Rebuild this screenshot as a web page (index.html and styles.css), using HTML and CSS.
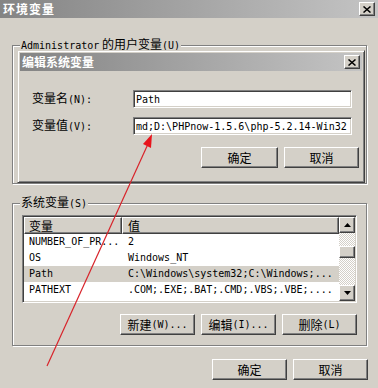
FILE: index.html
```html
<!DOCTYPE html>
<html lang="zh-CN">
<head>
  <meta charset="UTF-8">
  <title>环境变量</title>
  <link rel="stylesheet" href="styles.css">
</head>
<body>
  <div class="window">
    <!-- Title bar -->
    <div class="titlebar">
      <span class="title">环境变量</span>
      <span class="close-btn">
        <svg width="8" height="7" viewBox="0 0 8 7"><path d="M0.5 0.5 L7.5 6.5 M7.5 0.5 L0.5 6.5" stroke="#000" stroke-width="1.5"/></svg>
      </span>
    </div>

    <div class="client">
      <!-- User variables -->
      <fieldset class="group group-user">
        <legend><span class="m">Administrator</span> 的用户变量<span class="m">(U)</span></legend>
      </fieldset>

      <!-- System variables -->
      <fieldset class="group group-sys">
        <legend>系统变量<span class="m">(S)</span></legend>
        <div class="listview">
          <div class="list-main">
            <div class="list-head">
              <span class="col-name head-cell">变量</span>
              <span class="col-val head-cell">值</span>
            </div>
            <div class="row"><span class="col-name m">NUMBER_OF_PR...</span><span class="col-val m">2</span></div>
            <div class="row"><span class="col-name m">OS</span><span class="col-val m">Windows_NT</span></div>
            <div class="row selected"><span class="col-name m">Path</span><span class="col-val m">C:\Windows\system32;C:\Windows;...</span></div>
            <div class="row"><span class="col-name m">PATHEXT</span><span class="col-val m">.COM;.EXE;.BAT;.CMD;.VBS;.VBE;....</span></div>
          </div>
          <div class="scrollbar">
            <span class="btn sb-btn"><svg width="7" height="4" viewBox="0 0 7 4"><polygon points="3.5,0 7,4 0,4" fill="#000"/></svg></span>
            <span class="sb-track"><span class="btn sb-thumb"></span></span>
            <span class="btn sb-btn"><svg width="7" height="4" viewBox="0 0 7 4"><polygon points="0,0 7,0 3.5,4" fill="#000"/></svg></span>
          </div>
        </div>
        <div class="btn-row group-btns">
          <span class="btn">新建<span class="m">(W)...</span></span>
          <span class="btn">编辑<span class="m">(I)...</span></span>
          <span class="btn">删除<span class="m">(L)</span></span>
        </div>
      </fieldset>

      <div class="btn-row main-btns">
        <span class="btn">确定</span>
        <span class="btn">取消</span>
      </div>
    </div>

    <!-- Edit dialog on top -->
    <div class="edit-dialog">
      <div class="dlg-title">
        <span>编辑系统变量</span>
        <span class="close-btn">
          <svg width="8" height="7" viewBox="0 0 8 7"><path d="M0.5 0.5 L7.5 6.5 M7.5 0.5 L0.5 6.5" stroke="#000" stroke-width="1.5"/></svg>
        </span>
      </div>
      <div class="dlg-form">
        <label>变量名<span class="m">(N):</span></label>
        <span class="field m">Path</span>
        <label>变量值<span class="m">(V):</span></label>
        <span class="field m">md;D:\PHPnow-1.5.6\php-5.2.14-Win32</span>
      </div>
      <div class="btn-row dlg-btns">
        <span class="btn">确定</span>
        <span class="btn">取消</span>
      </div>
    </div>

    <!-- Red annotation arrow -->
    <svg class="annotation" width="378" height="388" viewBox="0 0 378 388">
      <line x1="47" y1="366" x2="148" y2="144" stroke="#d8232a" stroke-width="1.2"/>
      <polygon points="152,134 151,148 143,144" fill="#e8141c"/>
    </svg>
  </div>
</body>
</html>
```

FILE: styles.css
```css
/* Classic Windows dialog */
body {
  margin: 0;
  padding: 0;
  font-family: "Noto Sans CJK SC", sans-serif;
  font-size: 12px;
  line-height: 16px;
  color: #000;
  background-color: #d4d0c8;
}

.m {
  font-family: "DejaVu Sans Mono", monospace;
  font-size: 10px;
}

.window {
  position: relative;
  width: 378px;
  height: 388px;
  overflow: hidden;
  background-color: #d4d0c8;
}

.titlebar {
  height: 18px;
  display: flex;
  align-items: center;
  justify-content: space-between;
  padding: 0 3px 0 3px;
  background: linear-gradient(to right, #848484, #c4c4c4);
}

.title {
  color: white;
  font-weight: bold;
  font-size: 12px;
  letter-spacing: 1px;
}

.close-btn {
  width: 16px;
  height: 14px;
  box-sizing: border-box;
  display: flex;
  align-items: center;
  justify-content: center;
  background-color: #d4d0c8;
  border: 1px solid;
  border-color: #fff #404040 #404040 #fff;
  box-shadow: inset -1px -1px #808080;
}

.client {
  padding: 18px 10px 0 12px;
}

.group {
  margin: 0 1px 0 0;
  padding: 0 9px 0 9px;
  border: 1px solid #808080;
  box-shadow: 1px 1px 0 #fff, inset 1px 1px 0 #fff;
  min-width: 0;
}

.group legend {
  padding: 0 1px;
  margin-left: -2px;
  line-height: 16px;
  background-color: #d4d0c8;
}

.group-user {
  box-sizing: border-box;
  height: 148px;
}

.group-sys {
  margin-top: 10px;
  padding-bottom: 10px;
}

/* Buttons */
.btn {
  box-sizing: border-box;
  display: inline-flex;
  align-items: center;
  justify-content: center;
  width: 75px;
  height: 21px;
  background-color: #d4d0c8;
  border: 1px solid;
  border-color: #fff #404040 #404040 #fff;
  box-shadow: inset -1px -1px #808080;
  white-space: nowrap;
}

.btn-row {
  display: flex;
  justify-content: flex-end;
  gap: 6px;
}

.group-btns {
  margin-top: 11px;
}

.main-btns {
  margin-top: 13px;
}

/* List view */
.listview {
  margin-top: 3px;
  height: 88px;
  box-sizing: border-box;
  display: flex;
  background-color: white;
  border: 1px solid;
  border-color: #808080 #fff #fff #808080;
  box-shadow: inset 1px 1px #404040, inset -1px -1px #d4d0c8;
  padding: 1px;
}

.list-main {
  flex: 1;
  min-width: 0;
  overflow: hidden;
}

.list-head {
  display: flex;
  height: 17px;
}

.head-cell {
  box-sizing: border-box;
  height: 17px;
  line-height: 15px;
  background-color: #d4d0c8;
  border: 1px solid;
  border-color: #fff #404040 #404040 #fff;
  box-shadow: inset -1px -1px #808080;
}

.col-name {
  width: 98px;
  flex: none;
  padding-left: 4px;
  box-sizing: border-box;
  white-space: nowrap;
}

.col-val {
  flex: 1;
  padding-left: 5px;
  white-space: nowrap;
}

.row {
  display: flex;
  height: 16px;
  line-height: 16px;
}

.row .col-name {
  padding-left: 5px;
}

.row .col-val {
  padding-left: 6px;
}

.row.selected {
  background-color: #d4d0c8;
}

.scrollbar {
  width: 16px;
  flex: none;
  display: flex;
  flex-direction: column;
}

.scrollbar .sb-btn {
  width: 16px;
  height: 16px;
  flex: none;
}

.sb-track {
  flex: 1;
  background: repeating-conic-gradient(#fff 0 25%, #d4d0c8 0 50%) 0 0 / 2px 2px;
  padding-top: 13px;
}

.sb-track .sb-thumb {
  display: block;
  width: 16px;
  height: 12px;
}

/* Edit dialog */
.edit-dialog {
  position: absolute;
  left: 17px;
  top: 50px;
  width: 348px;
  height: 133px;
  box-sizing: border-box;
  padding: 2px;
  background-color: #d4d0c8;
  border: 1px solid;
  border-color: #d4d0c8 #404040 #404040 #d4d0c8;
  box-shadow: inset 1px 1px #fff, inset -1px -1px #808080;
}

.dlg-title {
  height: 18px;
  display: flex;
  align-items: center;
  justify-content: space-between;
  padding: 0 2px 0 2px;
  color: white;
  font-weight: bold;
  background: linear-gradient(to right, #848484, #c4c4c4);
}

.dlg-form {
  display: grid;
  grid-template-columns: 101px 219px;
  row-gap: 9px;
  align-items: center;
  padding: 19px 0 0 12px;
}

.field {
  box-sizing: border-box;
  height: 18px;
  line-height: 14px;
  padding: 2px 2px;
  white-space: nowrap;
  overflow: hidden;
  background-color: white;
  border: 1px solid;
  border-color: #808080 #fff #fff #808080;
  box-shadow: inset 1px 1px #404040, inset -1px -1px #d4d0c8;
}

.dlg-btns {
  margin-top: 12px;
  padding-right: 3px;
}

.dlg-btns .btn:first-child {
  width: 77px;
}

.annotation {
  position: absolute;
  left: 0;
  top: 0;
  pointer-events: none;
}
```
